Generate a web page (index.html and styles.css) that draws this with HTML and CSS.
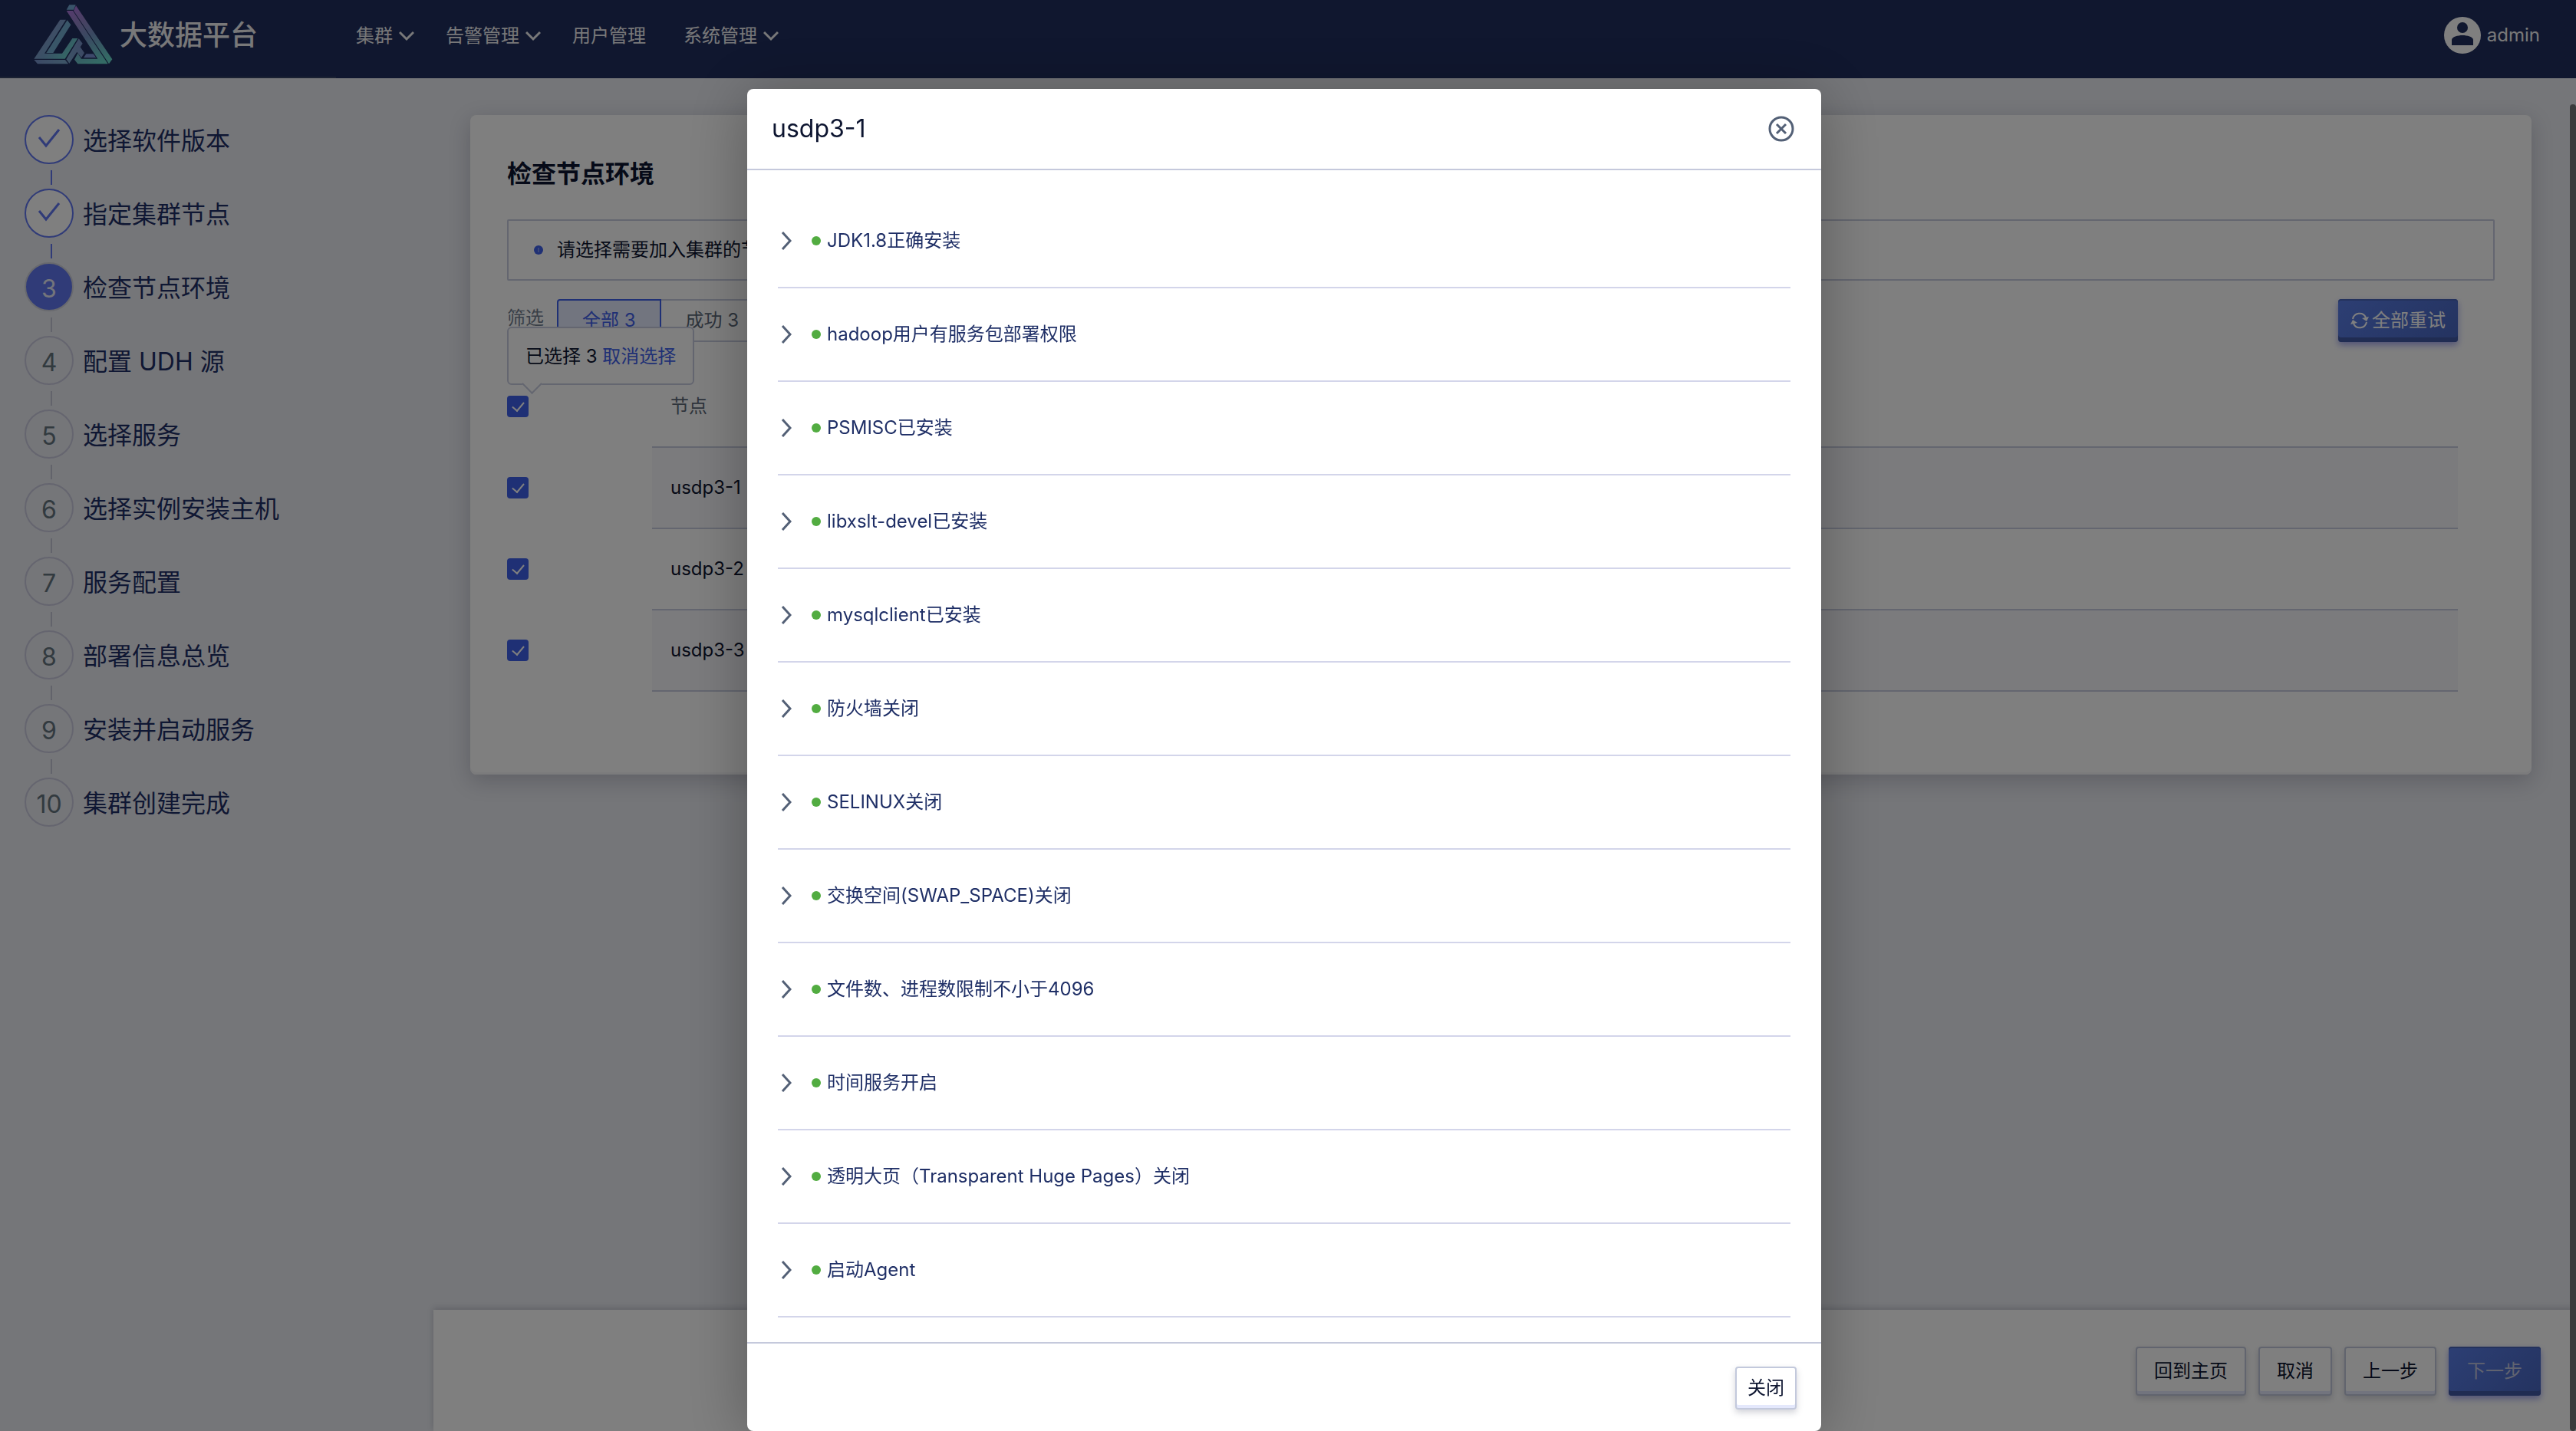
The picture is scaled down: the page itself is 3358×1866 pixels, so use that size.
FILE: index.html
```html
<!DOCTYPE html>
<html lang="zh-CN">
<head>
<meta charset="utf-8">
<title>大数据平台</title>
<link rel="stylesheet" href="styles.css">
</head>
<body>
<div class="app">
  <header class="topbar">
    <a class="brand" href="#">
      <svg class="logo" viewBox="0 0 378 300" aria-hidden="true">
        <defs>
          <linearGradient id="bar" gradientUnits="userSpaceOnUse" x1="190" y1="20" x2="290" y2="250">
            <stop offset="0" stop-color="#b878e8"/><stop offset=".3" stop-color="#9888cc"/><stop offset=".55" stop-color="#7898c8"/><stop offset="1" stop-color="#6ce0d0"/>
          </linearGradient>
          <linearGradient id="hook" gradientUnits="userSpaceOnUse" x1="90" y1="90" x2="210" y2="190">
            <stop offset="0" stop-color="#9098d0"/><stop offset=".5" stop-color="#78a8d0"/><stop offset="1" stop-color="#6cdcd0"/>
          </linearGradient>
          <linearGradient id="side" gradientUnits="userSpaceOnUse" x1="50" y1="240" x2="240" y2="170">
            <stop offset="0" stop-color="#7c98d0"/><stop offset=".5" stop-color="#80b0d4"/><stop offset="1" stop-color="#7c94cc"/>
          </linearGradient>
        </defs>
        <g opacity=".95">
          <path fill="#78b0dc" d="M181 19h25l-8 19h-28z"/>
          <path fill="url(#bar)" d="M207 22L349 232 336 250 198 42z"/>
          <path fill="url(#bar)" d="M170 42h25L332 250H214L201 233 214 208 228 230H292z"/>
          <path fill="#8098dc" d="M247 211h28l11 15h-49z"/>
          <path fill="url(#hook)" d="M145 77h23L84 209h69l40-59h21L164 230H43z"/>
          <path fill="#78b4d8" d="M173 79l14 18-69 110H91z"/>
          <path fill="url(#side)" d="M43 234h122l12 16H57z"/>
          <path fill="url(#side)" d="M218 151l15 19-9 14 16 23-12 19-17-23-30 45-12-16z"/>
        </g>
      </svg>
      <span class="brand-name">大数据平台</span>
    </a>
    <nav class="menu">
      <a href="#">集群<svg class="caret" viewBox="0 0 20 14"><path d="M1 2l9 9 9-9"/></svg></a>
      <a href="#">告警管理<svg class="caret" viewBox="0 0 20 14"><path d="M1 2l9 9 9-9"/></svg></a>
      <a class="plain" href="#">用户管理</a>
      <a href="#">系统管理<svg class="caret" viewBox="0 0 20 14"><path d="M1 2l9 9 9-9"/></svg></a>
    </nav>
    <a class="user" href="#">
      <svg class="avatar" viewBox="0 0 48 48" aria-hidden="true"><circle class="avatar-disc" cx="24" cy="24" r="24"/><circle class="avatar-ink" cx="24" cy="14" r="7"/><path class="avatar-ink" d="M10 37v-7c0-4 8-6 14-6s14 2 14 6v7z"/></svg>
      admin
    </a>
  </header>

  <div class="layout">
    <aside class="sidebar">
      <ol class="steps">
        <li class="step done"><span class="mark"><svg class="tick" viewBox="0 0 30 26"><path d="M2 12l9 11L28 2"/></svg></span>选择软件版本</li>
        <li class="step done"><span class="mark"><svg class="tick" viewBox="0 0 30 26"><path d="M2 12l9 11L28 2"/></svg></span>指定集群节点</li>
        <li class="step current"><span class="mark">3</span>检查节点环境</li>
        <li class="step"><span class="mark">4</span>配置 UDH 源</li>
        <li class="step"><span class="mark">5</span>选择服务</li>
        <li class="step"><span class="mark">6</span>选择实例安装主机</li>
        <li class="step"><span class="mark">7</span>服务配置</li>
        <li class="step"><span class="mark">8</span>部署信息总览</li>
        <li class="step"><span class="mark">9</span>安装并启动服务</li>
        <li class="step"><span class="mark">10</span>集群创建完成</li>
      </ol>
    </aside>

    <main class="main">
      <div class="content">
        <section class="card">
          <h1 class="card-title">检查节点环境</h1>
          <div class="notice"><svg class="info" viewBox="0 0 12 12"><circle cx="6" cy="6" r="6"/><path d="M6 3v6"/></svg>请选择需要加入集群的节点</div>
          <div class="filters">
            <span class="filter-label">筛选</span>
            <div class="segments">
              <button class="segment active" type="button">全部 3</button>
              <button class="segment" type="button">成功 3</button>
            </div>
            <button class="btn primary small" type="button">
              <svg class="refresh" viewBox="0 0 24 24"><path class="arc" d="M3 10A9 9 0 0 1 20 8M21 14A9 9 0 0 1 4 16"/><path class="head" d="M15 9l9-2-3 6zM9 15l-9 2 3-6z"/></svg>全部重试
            </button>
          </div>
          <table class="nodes">
            <thead>
              <tr><td class="pick"><div class="pick-all"><input type="checkbox" aria-label="全选" checked><div class="popover">已选择 3 <a href="#">取消选择</a></div></div></td><th scope="col">节点</th></tr>
            </thead>
            <tbody>
              <tr><td class="pick"><input type="checkbox" aria-label="usdp3-1" checked></td><td>usdp3-1</td></tr>
              <tr><td class="pick"><input type="checkbox" aria-label="usdp3-2" checked></td><td>usdp3-2</td></tr>
              <tr><td class="pick"><input type="checkbox" aria-label="usdp3-3" checked></td><td>usdp3-3</td></tr>
            </tbody>
          </table>
        </section>
      </div>
      <footer class="actions">
        <button class="btn" type="button">回到主页</button>
        <button class="btn" type="button">取消</button>
        <button class="btn" type="button">上一步</button>
        <button class="btn primary muted" type="button">下一步</button>
      </footer>
    </main>
  </div>
  <div class="scrollbar" aria-hidden="true"></div>
</div>

<div class="overlay">
  <div class="modal" role="dialog" aria-modal="true" aria-labelledby="modal-title">
    <div class="modal-head">
      <h2 class="modal-title" id="modal-title">usdp3-1</h2>
      <button class="close" type="button" aria-label="关闭"><svg viewBox="0 0 34 34"><circle cx="17" cy="17" r="15"/><path d="M11 11l12 12M23 11L11 23"/></svg></button>
    </div>
    <ul class="checks">
      <li><button class="check" type="button"><svg class="chevron" viewBox="0 0 14 24"><path d="M2 1l10 11L2 23"/></svg><i class="dot"></i>JDK1.8正确安装</button></li>
      <li><button class="check" type="button"><svg class="chevron" viewBox="0 0 14 24"><path d="M2 1l10 11L2 23"/></svg><i class="dot"></i>hadoop用户有服务包部署权限</button></li>
      <li><button class="check" type="button"><svg class="chevron" viewBox="0 0 14 24"><path d="M2 1l10 11L2 23"/></svg><i class="dot"></i>PSMISC已安装</button></li>
      <li><button class="check" type="button"><svg class="chevron" viewBox="0 0 14 24"><path d="M2 1l10 11L2 23"/></svg><i class="dot"></i>libxslt-devel已安装</button></li>
      <li><button class="check" type="button"><svg class="chevron" viewBox="0 0 14 24"><path d="M2 1l10 11L2 23"/></svg><i class="dot"></i>mysqlclient已安装</button></li>
      <li><button class="check" type="button"><svg class="chevron" viewBox="0 0 14 24"><path d="M2 1l10 11L2 23"/></svg><i class="dot"></i>防火墙关闭</button></li>
      <li><button class="check" type="button"><svg class="chevron" viewBox="0 0 14 24"><path d="M2 1l10 11L2 23"/></svg><i class="dot"></i>SELINUX关闭</button></li>
      <li><button class="check" type="button"><svg class="chevron" viewBox="0 0 14 24"><path d="M2 1l10 11L2 23"/></svg><i class="dot"></i>交换空间(SWAP_SPACE)关闭</button></li>
      <li><button class="check" type="button"><svg class="chevron" viewBox="0 0 14 24"><path d="M2 1l10 11L2 23"/></svg><i class="dot"></i>文件数、进程数限制不小于4096</button></li>
      <li><button class="check" type="button"><svg class="chevron" viewBox="0 0 14 24"><path d="M2 1l10 11L2 23"/></svg><i class="dot"></i>时间服务开启</button></li>
      <li><button class="check" type="button"><svg class="chevron" viewBox="0 0 14 24"><path d="M2 1l10 11L2 23"/></svg><i class="dot"></i>透明大页（Transparent Huge Pages）关闭</button></li>
      <li><button class="check" type="button"><svg class="chevron" viewBox="0 0 14 24"><path d="M2 1l10 11L2 23"/></svg><i class="dot"></i>启动Agent</button></li>
    </ul>
    <div class="modal-foot"><button class="btn small" type="button">关闭</button></div>
  </div>
</div>
</body>
</html>
```
FILE: styles.css
```css
:root {
  --navy: #202e5e;
  --text: #1f2f66;
  --ink: #0d1530;
  --slate: #536076;
  --blue: #3f60ea;
  --indigo: #6076f0;
  --line: #c8cde0;
}

* { box-sizing: border-box; }

body {
  margin: 0;
  font: 24px/32px Inter, "Noto Sans CJK SC", sans-serif;
  color: var(--ink);
  background: #eaecf2;
}

a { color: inherit; text-decoration: none; }
button { font: inherit; color: inherit; cursor: pointer; }
svg { display: block; flex: none; }

.app {
  min-height: 100vh;
  display: flex;
  flex-direction: column;
}

/* top bar */
.topbar {
  display: flex;
  align-items: center;
  height: 102px;
  padding-right: 47px;
  background: var(--navy);
  color: #f0f0f2;
}
.brand {
  display: flex;
  width: 438px;
  height: 102px;
  padding-left: 30px;
  border-bottom: 2px solid #364466;
}
.logo { width: 126px; height: 100px; }
.brand-name {
  font-size: 36px;
  line-height: 92px;
  font-weight: 500;
}
.menu {
  display: flex;
  gap: 41px;
  flex: 1;
  padding: 0 0 8px 26px;
}
.menu a { display: flex; align-items: center; gap: 8px; }
.menu .plain { padding-right: 8px; }
.caret { width: 20px; height: 14px; }
.caret path { fill: none; stroke: currentColor; stroke-width: 3; }
.user {
  display: flex;
  align-items: center;
  gap: 8px;
  padding-bottom: 10px;
}
.avatar { width: 48px; height: 48px; }
.avatar-disc { fill: #fff; }
.avatar-ink { fill: var(--navy); }

/* page body */
.layout { flex: 1; display: flex; }
.sidebar { width: 565px; flex: none; }
.steps {
  list-style: none;
  margin: 0;
  padding: 48px 32px;
  display: grid;
  gap: 32px;
}
.step {
  position: relative;
  display: flex;
  align-items: center;
  gap: 12px;
  height: 64px;
  padding-top: 4px;
  font-size: 32px;
  color: var(--text);
}
.step:not(:last-child)::after {
  content: "";
  position: absolute;
  left: 34px;
  top: 72px;
  width: 2px;
  height: 19px;
  background: #c4c6d6;
}
.step.done::after { background: var(--indigo); }
.mark {
  display: flex;
  align-items: center;
  justify-content: center;
  flex: none;
  width: 64px;
  height: 64px;
  margin-bottom: 4px;
  padding-top: 6px;
  border: 2px solid #cacade;
  border-radius: 50%;
  color: #64747f;
}
.done .mark { background: #fff; border-color: var(--indigo); padding: 0 0 4px; }
.current .mark { background: var(--indigo); border-color: #d0d2dc; color: #e8eaf6; }
.tick { width: 30px; height: 26px; }
.tick path { fill: none; stroke: var(--indigo); stroke-width: 3; }

.main {
  flex: 1;
  min-width: 0;
  display: flex;
  flex-direction: column;
}
.content { flex: 1; padding: 48px 58px 48px 48px; }
.card {
  padding: 48px 48px 108px;
  background: #fff;
  border-radius: 8px;
  box-shadow: inset 0 -3px #f6f6f8, 0 8px 28px rgba(30, 34, 60, .22);
}
.card-title {
  margin: 0 0 30px;
  font-size: 32px;
  line-height: 58px;
  font-weight: 700;
}
.notice {
  display: flex;
  align-items: center;
  gap: 18px;
  height: 80px;
  padding: 0 33px;
  border: 2px solid var(--line);
  border-radius: 2px;
}
.info { width: 12px; height: 12px; fill: var(--blue); }
.info path { stroke: #b0bcf4; stroke-width: 1; }

.filters {
  display: flex;
  align-items: center;
  padding: 24px 48px 32px 0;
}
.filter-label { width: 65px; padding-bottom: 6px; color: #737f90; }
.segments { display: flex; flex: 1; }
.segment {
  height: 56px;
  padding: 0 32px;
  border: 2px solid var(--line);
  border-left-width: 0;
  background: #fff;
  color: #5c6878;
}
.segment.active {
  padding: 0 31px;
  border: 2px solid var(--blue);
  border-radius: 4px 0 0 4px;
  background: #e4eafe;
  color: var(--blue);
}

.btn {
  display: flex;
  align-items: center;
  justify-content: center;
  height: 64px;
  padding: 0 22px;
  border: 2px solid #c3c9dc;
  border-radius: 4px;
  background: #fff;
  box-shadow: inset 0 -4px #e4e8fc, 0 4px 8px rgba(50, 54, 80, .22);
}
.btn.small { height: 56px; padding: 0 14px; }
.btn.primary {
  border: 0;
  padding: 0 24px;
  background: linear-gradient(135deg, #5a7ee8, #4866c0);
  color: #fff;
  box-shadow: inset 0 2px #4864b8, inset 0 -6px #4058a4, 0 4px 8px rgba(70, 80, 220, .5);
}
.btn.primary.small { padding: 0 16px; gap: 4px; }
.btn.primary.muted { color: #c0c6e0; }
.refresh { width: 24px; height: 24px; }
.refresh .arc { fill: none; stroke: currentColor; stroke-width: 2; }
.refresh .head { fill: currentColor; }

.nodes { width: calc(100% - 48px); border-collapse: separate; border-spacing: 0; }
.nodes th, .nodes td {
  height: 106px;
  padding: 0 24px;
  text-align: left;
  font-weight: 400;
  border-bottom: 2px solid var(--line);
}
.nodes th { color: #5c6878; }
.nodes tbody tr:nth-child(odd) td { background: #f6f6fb; }
.nodes tr .pick, .nodes tbody tr:nth-child(odd) .pick {
  width: 189px;
  padding: 0;
  border-bottom-color: transparent;
  background: none;
}
.pick-all { position: relative; height: 28px; }
input[type="checkbox"] {
  appearance: none;
  display: grid;
  place-items: center;
  width: 28px;
  height: 28px;
  margin: 0;
  border-radius: 4px;
  background: var(--blue);
}
input[type="checkbox"]::before {
  content: "";
  width: 7px;
  height: 13px;
  margin-bottom: 4px;
  border: solid #fff;
  border-width: 0 2px 2px 0;
  rotate: 40deg;
}
.popover {
  position: absolute;
  left: 0;
  bottom: 42px;
  height: 76px;
  padding: 0 22px;
  line-height: 74px;
  white-space: nowrap;
  background: #fff;
  border: 2px solid var(--line);
  border-radius: 6px;
}
.popover a { color: var(--blue); }
.popover::after {
  content: "";
  position: absolute;
  left: 21px;
  bottom: -10px;
  width: 17px;
  height: 17px;
  background: #fff;
  border: solid var(--line);
  border-width: 0 2px 2px 0;
  rotate: 45deg;
}

.actions {
  display: flex;
  justify-content: flex-end;
  gap: 16px;
  padding: 48px 46px 46px;
  background: #fff;
  box-shadow: 0 -2px 8px rgba(30, 34, 60, .2);
}

.scrollbar {
  position: fixed;
  top: 136px;
  right: 0;
  bottom: 0;
  width: 8px;
  border-radius: 4px;
  background: #747679;
}

/* dialog */
.overlay {
  position: fixed;
  inset: 0;
  overflow: hidden;
  padding: 116px 10px 0 0;
  background: rgba(0, 0, 0, .5);
}
.modal {
  width: 1400px;
  max-width: 100%;
  margin: 0 auto;
  background: #fff;
  border-radius: 8px;
  box-shadow: 0 8px 80px rgba(0, 0, 0, .3);
}
.modal-head {
  display: flex;
  align-items: center;
  justify-content: space-between;
  height: 106px;
  padding: 0 35px 0 32px;
  border-bottom: 2px solid #c5c9dc;
}
.modal-title { margin: 0; font-size: 32px; font-weight: 400; }
.close { padding: 0; border: 0; background: none; }
.close svg { width: 34px; height: 34px; fill: none; stroke: var(--slate); stroke-width: 3; }
.checks { list-style: none; margin: 0; padding: 32px 40px; }
.checks li { border-bottom: 2px solid #d3d5ea; }
.check {
  display: flex;
  align-items: center;
  width: 100%;
  height: 120px;
  padding: 0 4px;
  border: 0;
  background: none;
  color: var(--text);
}
.chevron { width: 14px; height: 24px; margin-right: 26px; }
.chevron path { fill: none; stroke: var(--slate); stroke-width: 3; }
.dot {
  width: 12px;
  height: 12px;
  margin-right: 8px;
  border-radius: 50%;
  background: #52ac41;
}
.modal-foot {
  display: flex;
  justify-content: flex-end;
  padding: 30px 32px 28px;
  border-top: 2px solid #c5c9dc;
}
```
